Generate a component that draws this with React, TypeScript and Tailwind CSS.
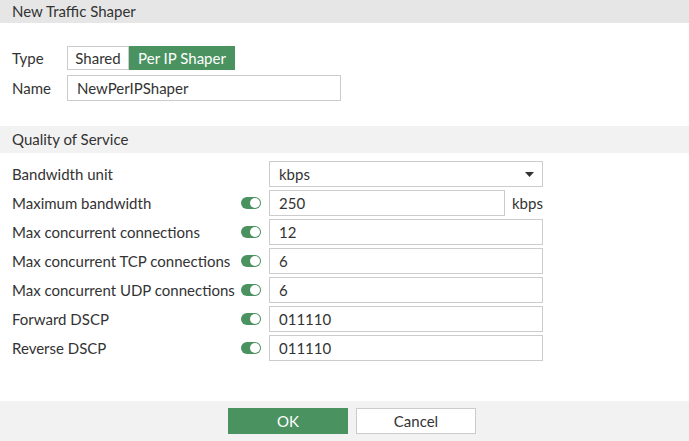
const rows = [
  { label: 'Maximum bandwidth', value: '250', unit: 'kbps' },
  { label: 'Max concurrent connections', value: '12' },
  { label: 'Max concurrent TCP connections', value: '6' },
  { label: 'Max concurrent UDP connections', value: '6' },
  { label: 'Forward DSCP', value: '011110' },
  { label: 'Reverse DSCP', value: '011110' },
];

const Toggle = () => (
  <div className="w-[20px] h-[12px] rounded-full bg-[#4a9260] flex items-center justify-end pr-[1px]">
    <div className="w-[10px] h-[10px] rounded-full bg-white" />
  </div>
);

export default function App() {
  return (
    <div className="w-[689px] h-[441px] flex flex-col bg-white text-[#333] text-[15px] font-['Lato','Liberation_Sans',sans-serif]">
      {/* Header */}
      <div className="h-[23px] bg-[#e6e6e6] flex items-center px-[12px] text-[#333]">
        New Traffic Shaper
      </div>

      {/* General */}
      <div className="pt-[23px] px-[12px] flex flex-col gap-[5px]">
        <div className="flex items-center h-[24px]">
          <span className="w-[55px]">Type</span>
          <div className="flex h-[24px]">
            <div className="w-[62px] border border-[#ccc] flex items-center justify-center bg-white">Shared</div>
            <div className="w-[106px] bg-[#4a9260] text-white flex items-center justify-center">Per IP Shaper</div>
          </div>
        </div>
        <div className="flex items-center h-[26px]">
          <span className="w-[55px]">Name</span>
          <div className="w-[274px] h-[26px] border border-[#ccc] flex items-center px-[9px]">NewPerIPShaper</div>
        </div>
      </div>

      {/* Quality of Service */}
      <div className="mt-[25px] h-[27px] bg-[#f2f2f2] flex items-center px-[12px]">
        Quality of Service
      </div>

      <div className="pt-[8px] px-[12px] flex flex-col gap-[3px]">
        <div className="flex items-center h-[26px]">
          <span className="w-[257px]">Bandwidth unit</span>
          <div className="w-[274px] h-[26px] border border-[#ccc] flex items-center justify-between px-[9px] pr-[8px]">
            <span>kbps</span>
            <svg width="9" height="5" viewBox="0 0 9 5">
              <path d="M0 0 L9 0 L4.5 5 Z" fill="#333" />
            </svg>
          </div>
        </div>
        {rows.map((r) => (
          <div key={r.label} className="flex items-center h-[26px]">
            <span className="w-[229px] whitespace-nowrap">{r.label}</span>
            <Toggle />
            <div
              className={
                r.unit
                  ? 'ml-[8px] w-[236px] h-[26px] border border-[#ccc] flex items-center px-[9px]'
                  : 'ml-[8px] w-[274px] h-[26px] border border-[#ccc] flex items-center px-[9px]'
              }
            >
              {r.value}
            </div>
            {r.unit && <span className="ml-[7px]">{r.unit}</span>}
          </div>
        ))}
      </div>

      {/* Footer */}
      <div className="mt-auto h-[40px] bg-[#f2f2f2] flex items-center pl-[228px] gap-[8px]">
        <button className="w-[120px] h-[26px] bg-[#4a9260] text-white">OK</button>
        <button className="w-[120px] h-[26px] bg-white border border-[#ccc] text-[#333]">Cancel</button>
      </div>
    </div>
  );
}
